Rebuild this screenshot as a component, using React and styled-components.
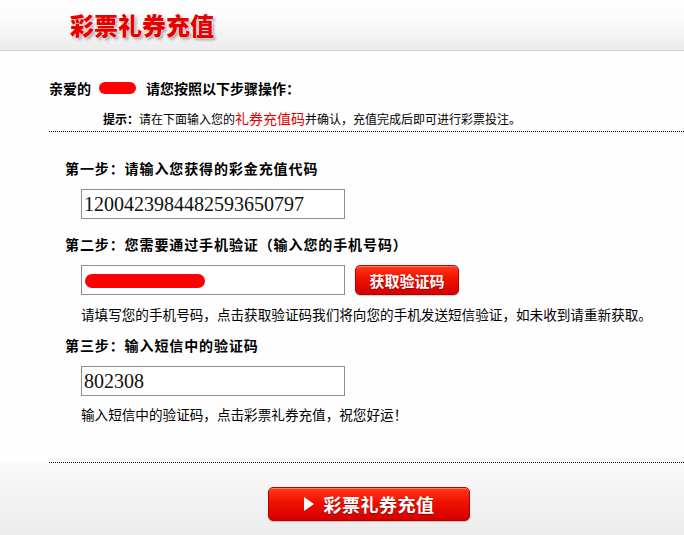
import React from "react";
import styled, { createGlobalStyle } from "styled-components";

const GlobalStyle = createGlobalStyle`
  html, body {
    margin: 0;
    padding: 0;
    background: #ededed;
  }
  body {
    font-family: "Noto Sans CJK SC", "Liberation Sans", sans-serif;
    color: #000;
  }
`;

const App = () => {
  return (
    <Page>
      <GlobalStyle />
      <Header>
        <Title>彩票礼券充值</Title>
      </Header>
      <Main>
        <Greeting>
          亲爱的<Blot $w={37} $h={12} $l={8} $r={10} />请您按照以下步骤操作：
        </Greeting>
        <Tip>
          <b>提示：</b>请在下面输入您的<Em>礼券充值码</Em>并确认，充值完成后即可进行彩票投注。
        </Tip>
        <Steps>
          <StepTitle $top={26}>第一步：请输入您获得的彩金充值代码</StepTitle>
          <FieldRow>
            <Input defaultValue="1200423984482593650797" />
          </FieldRow>

          <StepTitle $top={15}>第二步：您需要通过手机验证（输入您的手机号码）</StepTitle>
          <FieldRow>
            <FakeInput>
              <Blot $w={120} $h={14} />
            </FakeInput>
            <SmallButton>获取验证码</SmallButton>
          </FieldRow>
          <Hint $top={9}>
            请填写您的手机号码，点击获取验证码我们将向您的手机发送短信验证，如未收到请重新获取。
          </Hint>

          <StepTitle $top={11}>第三步：输入短信中的验证码</StepTitle>
          <FieldRow>
            <Input defaultValue="802308" />
          </FieldRow>
          <Hint $top={8}>输入短信中的验证码，点击彩票礼券充值，祝您好运！</Hint>
        </Steps>
        <Divider $top={38} />
      </Main>
      <Footer>
        <SubmitButton>
          <Arrow />
          彩票礼券充值
        </SubmitButton>
      </Footer>
    </Page>
  );
};

export default App;

const Page = styled.div`
  width: 684px;
  height: 535px;
  overflow: hidden;
  background: #fefefe;
`;

const Header = styled.div`
  height: 50px;
  border-bottom: 1px solid #d4d4d4;
  background: linear-gradient(#ffffff 0%, #fbfbfb 40%, #ececec 100%);
  display: flex;
  align-items: center;
  padding-left: 70px;
  box-sizing: content-box;
`;

const Title = styled.h1`
  margin: 0 0 2px;
  font-size: 24px;
  font-weight: 900;
  color: #e80000;
  text-shadow: 0 0 1px #fff, 0 0 2px #fff, 2px 2px 3px rgba(0, 0, 0, 0.35);
`;

const Main = styled.div`
  padding-left: 49px;
`;

const Greeting = styled.div`
  margin-top: 27px;
  font-size: 14px;
  line-height: 20px;
  font-weight: bold;
  display: flex;
  align-items: center;
`;

const Blot = styled.span`
  display: inline-block;
  width: ${(p) => p.$w}px;
  height: ${(p) => p.$h}px;
  margin: 0 ${(p) => p.$r || 0}px 0 ${(p) => p.$l || 0}px;
  background: #ff0000;
  border-radius: ${(p) => p.$h / 2}px;
  filter: blur(0.4px);
`;

const Tip = styled.div`
  margin-top: 10px;
  padding: 0 0 2px 54px;
  font-size: 12px;
  line-height: 20px;
  border-bottom: 1px dotted #000;

  b {
    font-weight: bold;
  }
`;

const Em = styled.span`
  color: #e60000;
  font-size: 14px;
`;

const Steps = styled.div`
  padding-left: 16px;
`;

const StepTitle = styled.div`
  margin-top: ${(p) => p.$top}px;
  font-size: 14px;
  line-height: 20px;
  font-weight: bold;
  letter-spacing: 0.9px;
`;

const FieldRow = styled.div`
  margin-top: 11px;
  padding-left: 16px;
  display: flex;
  align-items: center;
  gap: 10px;
`;

const Input = styled.input`
  box-sizing: border-box;
  width: 264px;
  height: 30px;
  border: 1px solid #8e8e8e;
  padding: 1px 0 0 2px;
  font-family: "Liberation Serif", "DejaVu Serif", serif;
  font-size: 20px;
  color: #111;
  background: #fff;
  outline: none;
`;

const FakeInput = styled.div`
  box-sizing: border-box;
  width: 264px;
  height: 30px;
  border: 1px solid #8e8e8e;
  background: #fff;
  display: flex;
  align-items: center;
  padding: 1px 0 0 3px;
`;

const RedButton = styled.button`
  border: 1px solid #b80000;
  border-radius: 5px;
  background: linear-gradient(#ff3a1a 0%, #f01000 45%, #d40000 100%);
  box-shadow: inset 0 1px 0 rgba(255, 255, 255, 0.35), 0 1px 1px rgba(0, 0, 0, 0.2);
  color: #fff;
  font-family: "Noto Sans CJK SC", sans-serif;
  font-weight: bold;
  cursor: pointer;
  display: flex;
  align-items: center;
  justify-content: center;
  padding: 0;
`;

const SmallButton = styled(RedButton)`
  width: 104px;
  height: 30px;
  font-size: 15px;
  text-shadow: 0 1px 1px rgba(0, 0, 0, 0.3);
`;

const Hint = styled.div`
  margin-top: ${(p) => p.$top}px;
  padding-left: 16px;
  font-size: 13.6px;
  line-height: 20px;
  white-space: nowrap;
`;

const Divider = styled.div`
  margin-top: ${(p) => p.$top}px;
  border-top: 1px dotted #000;
`;

const Footer = styled.div`
  height: 72px;
  background: linear-gradient(#f9f9f9, #ececec);
  display: flex;
  justify-content: center;
  align-items: flex-start;
  padding: 24px 0 0 54px;
  box-sizing: border-box;
`;

const SubmitButton = styled(RedButton)`
  width: 202px;
  height: 34px;
  font-size: 18px;
  letter-spacing: 0.5px;
  gap: 8px;
  text-shadow: 0 1px 1px rgba(0, 0, 0, 0.35);
`;

const Arrow = styled.span`
  width: 0;
  height: 0;
  border-top: 7px solid transparent;
  border-bottom: 7px solid transparent;
  border-left: 10px solid #fff;
  margin-right: 2px;
`;
